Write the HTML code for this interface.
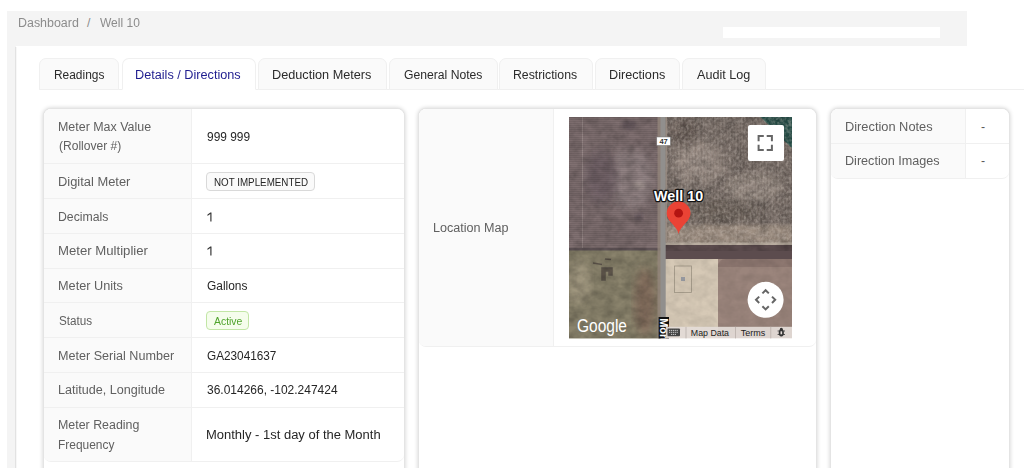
<!DOCTYPE html>
<html>
<head>
<meta charset="utf-8">
<style>
*{box-sizing:border-box;margin:0;padding:0}
html,body{width:1024px;height:476px;overflow:hidden;background:#fff;font-family:"Liberation Sans",sans-serif}
.a{position:absolute}
.t{position:absolute;white-space:nowrap;line-height:20px;transform-origin:0 50%;display:block}
#band{left:7px;top:11px;width:960px;height:35px;background:#f4f4f4}
#strip{left:7px;top:46px;width:9px;height:422px;background:#f4f4f4}
#stripsh{left:15px;top:47px;width:1px;height:421px;background:#e2e2e2;box-shadow:1px 0 0 #f7f7f7}
#search{left:723px;top:27px;width:217px;height:11px;background:#fff}
#tabline{left:39px;top:89px;width:985px;height:1px;background:#efefef}
.tab{position:absolute;top:58px;height:32px;background:#fafafa;border:1px solid #f0f0f0;border-radius:7px 7px 0 0}
.tab.act{background:#fff;border-bottom-color:#fff}
.card{position:absolute;top:108px;height:380px;background:#fff;border:1px solid #e4e4e4;border-radius:8px;box-shadow:0 0 4px rgba(0,0,0,.19)}
.tbl{position:absolute;left:0;top:0;right:0;border-bottom:1px solid #f0f0f0;border-radius:7px;overflow:hidden;background:#fff}
.lab{position:absolute;left:0;top:0;bottom:0;background:#fafafa;border-right:1px solid #f0f0f0}
.sep{position:absolute;left:0;right:0;height:1px;background:#f0f0f0}
.tag{position:absolute;border:1px solid #d9d9d9;border-radius:4px;background:#fafafa}
.tag.g{background:#f5fdec;border-color:#c2e6a6}
#cut{left:0;top:468px;width:1024px;height:8px;background:#fff}
</style>
</head>
<body>
<div id="band" class="a"></div>
<div id="strip" class="a"></div>
<div id="stripsh" class="a"></div>
<div id="search" class="a"></div>

<div id="tabline" class="a"></div>
<div class="tab" style="left:39px;width:80px"></div>
<div class="tab act" style="left:122px;width:134px"></div>
<div class="tab" style="left:258px;width:129px"></div>
<div class="tab" style="left:389px;width:109px"></div>
<div class="tab" style="left:499px;width:94px"></div>
<div class="tab" style="left:595px;width:85px"></div>
<div class="tab" style="left:682px;width:84px"></div>

<!-- left card -->
<div class="card" style="left:43px;width:362px">
  <div class="tbl" style="height:353px">
    <div class="lab" style="width:148px"></div>
    <div class="sep" style="top:54px"></div>
    <div class="sep" style="top:89px"></div>
    <div class="sep" style="top:124px"></div>
    <div class="sep" style="top:159px"></div>
    <div class="sep" style="top:193px"></div>
    <div class="sep" style="top:228px"></div>
    <div class="sep" style="top:263px"></div>
    <div class="sep" style="top:298px"></div>
  </div>
</div>
<div class="tag" style="left:206px;top:172px;width:109px;height:19px"></div>
<div class="tag g" style="left:206px;top:311px;width:43px;height:19px"></div>

<!-- middle card -->
<div class="card" style="left:418px;width:399px">
  <div class="tbl" style="height:238px">
    <div class="lab" style="width:135px"></div>
  </div>
</div>

<!-- right card -->
<div class="card" style="left:830px;width:180px">
  <div class="tbl" style="height:70px">
    <div class="lab" style="width:135px"></div>
    <div class="sep" style="top:34px"></div>
  </div>
</div>

<svg class="a" style="left:207px;top:212px" width="6" height="10" viewBox="0 0 6 10"><path d="M0.5 2.6 L3.3 0.6 H4.5 V9.4 H3.3 V2.1 L0.5 3.9z" fill="#383838"/></svg>
<svg class="a" style="left:207px;top:246px" width="6" height="10" viewBox="0 0 6 10"><path d="M0.5 2.6 L3.3 0.6 H4.5 V9.4 H3.3 V2.1 L0.5 3.9z" fill="#383838"/></svg>
<svg class="a" style="left:569px;top:117px" width="223" height="222" viewBox="0 0 223 222">
<defs>
  <filter id="nz" x="0" y="0" width="100%" height="100%">
    <feTurbulence type="fractalNoise" baseFrequency="0.09 0.12" numOctaves="3" seed="7" result="n"/>
    <feColorMatrix in="n" type="matrix" values="0 0 0 0 0  0 0 0 0 0  0 0 0 0 0  0.9 0.9 0 0 -0.62"/>
  </filter>
  <filter id="nz2" x="0" y="0" width="100%" height="100%">
    <feTurbulence type="fractalNoise" baseFrequency="0.05 0.07" numOctaves="2" seed="3" result="n"/>
    <feColorMatrix in="n" type="matrix" values="0 0 0 0 1  0 0 0 0 0.95  0 0 0 0 0.88  1.2 1.2 0 0 -0.95"/>
  </filter>
  <filter id="nz3" x="0" y="0" width="100%" height="100%"><feTurbulence type="fractalNoise" baseFrequency="0.35 0.3" numOctaves="2" seed="11" result="n"/><feColorMatrix in="n" type="matrix" values="0 0 0 0 0.78  0 0 0 0 0.70  0 0 0 0 0.64  1.6 1.6 0 0 -1.25"/></filter>
  <filter id="b2"><feGaussianBlur stdDeviation="2"/></filter>
  <filter id="b4"><feGaussianBlur stdDeviation="4"/></filter>
  <filter id="b1"><feGaussianBlur stdDeviation="0.7"/></filter>
  <pattern id="hl" width="4" height="2" patternUnits="userSpaceOnUse"><rect width="4" height="1" y="0" fill="#000" opacity="0.07"/></pattern>
  <pattern id="vl" width="3" height="4" patternUnits="userSpaceOnUse"><rect width="1" height="4" fill="#000" opacity="0.06"/></pattern>
  <clipPath id="mc"><rect width="223" height="221.4"/></clipPath>
</defs>
<g clip-path="url(#mc)">
  <!-- upper-left field -->
  <rect x="0" y="0" width="92" height="134" fill="#807071"/>
  <ellipse cx="62" cy="62" rx="22" ry="30" fill="#918283" filter="url(#b4)"/><ellipse cx="70" cy="68" rx="6" ry="4" fill="#a39592" filter="url(#b2)"/>
  <ellipse cx="32" cy="60" rx="16" ry="26" fill="#74656a" filter="url(#b4)"/><ellipse cx="60" cy="8" rx="8" ry="5" fill="#685a5e" filter="url(#b2)"/><ellipse cx="70" cy="100" rx="4" ry="4" fill="#685a5e" filter="url(#b2)"/><rect x="13" y="0" width="0.8" height="134" fill="#a89a98" opacity="0.7"/>
  <rect x="0" y="0" width="92" height="134" fill="url(#hl)"/>
  <!-- lower-left field -->
  <rect x="0" y="133" width="92" height="89" fill="#8a836c"/>
  <rect x="0" y="131" width="92" height="2.5" fill="#5f5256" filter="url(#b1)"/>
  <ellipse cx="10" cy="165" rx="12" ry="22" fill="#a0977f" filter="url(#b4)"/>
  <ellipse cx="76" cy="185" rx="11" ry="34" fill="#85705f" filter="url(#b4)"/>
  <path d="M33 151h10v7h-3v-4h-4v9h-3z M24 146l9 1.5 M36 142l6 0.5" fill="#5e564c" stroke="#5e564c" stroke-width="1.6" filter="url(#b1)"/>
  <!-- upper-right field -->
  <rect x="96" y="0" width="127" height="127" fill="#746963"/>
  <ellipse cx="130" cy="45" rx="26" ry="22" fill="#94877f" filter="url(#b4)"/>
  <ellipse cx="185" cy="70" rx="30" ry="14" fill="#90847b" filter="url(#b4)"/>
  <ellipse cx="150" cy="95" rx="38" ry="12" fill="#6a6058" filter="url(#b4)"/>
  <ellipse cx="115" cy="15" rx="14" ry="14" fill="#6a5e58" filter="url(#b4)"/>
  <rect x="96" y="0" width="127" height="127" fill="url(#vl)"/>
  <rect x="96" y="108" width="127" height="18" fill="#9c8d80" filter="url(#b2)"/>
  <path d="M189 -2 L225 -2 L225 33 Q214 23 206 14 Q198 6 189 -2z" fill="#265048" filter="url(#b1)"/>
  <!-- horizontal road + dark band -->
  <rect x="96" y="128" width="127" height="14" fill="#5c4c4e"/>
  <rect x="96" y="125.5" width="127" height="2.5" fill="#b9ada0"/>
  <!-- sandy + brown -->
  <rect x="96" y="142" width="53" height="79" fill="#d6c9b6"/>
  <rect x="149" y="142" width="74" height="79" fill="#9b857c"/>
  <path d="M149 150 Q149 142 157 142 L223 142 L223 150z" fill="#8d7770"/>
  <rect x="105.5" y="149" width="17" height="26.5" fill="none" stroke="#9f9484" stroke-width="0.8"/>
  <path d="M112 160h4v4h-4z" fill="#9a9ca3"/>
  <!-- texture -->
  <rect width="223" height="134" filter="url(#nz)" opacity="0.28"/><rect y="134" width="92" height="87" filter="url(#nz)" opacity="0.3"/><rect x="96" y="142" width="127" height="79" filter="url(#nz)" opacity="0.12"/>
  <rect x="96" y="0" width="127" height="126" filter="url(#nz3)" opacity="0.3"/>
  <!-- vertical road -->
  <rect x="88.5" y="0" width="3.5" height="221" fill="#94867c" opacity="0.8"/>
  <rect x="91.5" y="0" width="5.2" height="221" fill="#918f8d"/>
  <rect x="96.5" y="0" width="1.5" height="125" fill="#9c8f84" opacity="0.8"/>
  <!-- 47 shield -->
  <rect x="87.8" y="20" width="13.6" height="8.4" fill="#fff" stroke="#777" stroke-width="0.5"/>
  <text x="94.6" y="27" font-family="Liberation Sans, sans-serif" font-size="7.5" font-weight="bold" text-anchor="middle" fill="#333">47</text>
  <!-- fullscreen -->
  <rect x="179" y="8" width="36" height="36" rx="2" fill="#fff"/>
  <path d="M189.6 24.3v-5.3h5.2 M197.7 19h5.2v5.3 M202.9 27.7v5.3h-5.2 M194.8 33h-5.2v-5.3" fill="none" stroke="#666" stroke-width="2"/>
  <!-- pan -->
  <circle cx="196.6" cy="182.8" r="18" fill="#fff"/>
  <path d="M193.4 176.4l3.2-3.2 3.2 3.2 M193.4 189.2l3.2 3.2 3.2-3.2 M190.2 179.6l-3.2 3.2 3.2 3.2 M203 179.6l3.2 3.2-3.2 3.2" fill="none" stroke="#666" stroke-width="2"/>
  <!-- label -->
  <text x="109.6" y="83.8" font-family="Liberation Sans, sans-serif" font-size="14.3" font-weight="bold" text-anchor="middle" fill="#fff" stroke="#111" stroke-width="2.6" stroke-linejoin="round" paint-order="stroke">Well 10</text>
  <!-- marker -->
  <path d="M109.6 117 C108.6 109 97.7 104.5 97.7 96.4 A11.9 11.9 0 0 1 121.5 96.4 C121.5 104.5 110.6 109 109.6 117z" fill="#ea4335"/>
  <circle cx="109.6" cy="96.2" r="4.4" fill="#b31412"/>
  <!-- Google -->
  <text x="8" y="215" font-family="Liberation Sans, sans-serif" font-size="17.5" fill="#fff" textLength="50" lengthAdjust="spacingAndGlyphs">Google</text>
  <!-- Mon label -->
  <rect x="89.6" y="200" width="10.4" height="22" fill="#111"/>
  <text transform="translate(90.9,201.2) rotate(90)" font-family="Liberation Sans, sans-serif" font-size="11" font-weight="bold" fill="#fff">Mon</text>
  <!-- bottom bar -->
  <rect x="96.8" y="209.8" width="127" height="12" fill="#e4dcd8" opacity="0.92"/>
  <rect x="98.5" y="211.6" width="12.5" height="7.6" rx="1" fill="#444"/>
  <path d="M100 213.4h9.5 M100 215.3h9.5 M102 217.4h5.5" stroke="#ddd" stroke-width="0.9" stroke-dasharray="1.2 0.7"/>
  <rect x="116.6" y="209.8" width="0.8" height="12" fill="#b9b0ab"/>
  <rect x="166" y="209.8" width="0.8" height="12" fill="#b9b0ab"/>
  <rect x="201.4" y="209.8" width="0.8" height="12" fill="#b9b0ab"/>
  <text x="121.8" y="218.8" font-family="Liberation Sans, sans-serif" font-size="9" fill="#222" textLength="38.2" lengthAdjust="spacingAndGlyphs">Map Data</text>
  <text x="171.7" y="218.8" font-family="Liberation Sans, sans-serif" font-size="9" fill="#222" textLength="24.5" lengthAdjust="spacingAndGlyphs">Terms</text>
  <g fill="#333"><ellipse cx="212.3" cy="216" rx="2.6" ry="3.4"/><circle cx="212.3" cy="212.4" r="1.6"/><path d="M208.6 214l7.4 0 M208.6 217.5h7.4" stroke="#333" stroke-width="0.8"/><rect x="211.5" y="214.3" width="1.6" height="3" fill="#e4dcd8"/></g>
</g>
</svg>


<span class="t" style="left:18.49px;top:13.24px;font-size:12.3px;color:#8c8c8c;font-weight:400;transform:scaleX(1.0115)">Dashboard</span>
<span class="t" style="left:87.00px;top:13.24px;font-size:12.3px;color:#8c8c8c;font-weight:400;transform:scaleX(1.0000)">/</span>
<span class="t" style="left:99.50px;top:13.24px;font-size:12.3px;color:#8c8c8c;font-weight:400;transform:scaleX(0.9770)">Well 10</span>
<span class="t" style="left:53.53px;top:65.24px;font-size:12.3px;color:#2b2b2b;font-weight:400;transform:scaleX(0.9694)">Readings</span>
<span class="t" style="left:135.22px;top:65.24px;font-size:12.3px;color:#1f1d8f;font-weight:400;transform:scaleX(1.0310)">Details / Directions</span>
<span class="t" style="left:271.97px;top:65.24px;font-size:12.3px;color:#2b2b2b;font-weight:400;transform:scaleX(1.0318)">Deduction Meters</span>
<span class="t" style="left:403.75px;top:65.24px;font-size:12.3px;color:#2b2b2b;font-weight:400;transform:scaleX(0.9888)">General Notes</span>
<span class="t" style="left:513.30px;top:65.24px;font-size:12.3px;color:#2b2b2b;font-weight:400;transform:scaleX(0.9986)">Restrictions</span>
<span class="t" style="left:609.07px;top:65.24px;font-size:12.3px;color:#2b2b2b;font-weight:400;transform:scaleX(1.0295)">Directions</span>
<span class="t" style="left:697.40px;top:65.24px;font-size:12.3px;color:#2b2b2b;font-weight:400;transform:scaleX(1.0245)">Audit Log</span>
<span class="t" style="left:57.74px;top:117.04px;font-size:12.3px;color:#606060;font-weight:400;transform:scaleX(1.0116)">Meter Max Value</span>
<span class="t" style="left:58.75px;top:136.44px;font-size:12.3px;color:#606060;font-weight:400;transform:scaleX(0.9810)">(Rollover #)</span>
<span class="t" style="left:57.70px;top:171.84px;font-size:12.3px;color:#606060;font-weight:400;transform:scaleX(1.0490)">Digital Meter</span>
<span class="t" style="left:57.75px;top:206.94px;font-size:12.3px;color:#606060;font-weight:400;transform:scaleX(0.9967)">Decimals</span>
<span class="t" style="left:57.68px;top:241.04px;font-size:12.3px;color:#606060;font-weight:400;transform:scaleX(1.0699)">Meter Multiplier</span>
<span class="t" style="left:57.72px;top:276.34px;font-size:12.3px;color:#606060;font-weight:400;transform:scaleX(1.0329)">Meter Units</span>
<span class="t" style="left:58.75px;top:310.94px;font-size:12.3px;color:#606060;font-weight:400;transform:scaleX(0.9507)">Status</span>
<span class="t" style="left:57.73px;top:345.84px;font-size:12.3px;color:#606060;font-weight:400;transform:scaleX(1.0236)">Meter Serial Number</span>
<span class="t" style="left:57.73px;top:380.44px;font-size:12.3px;color:#606060;font-weight:400;transform:scaleX(1.0239)">Latitude, Longitude</span>
<span class="t" style="left:57.74px;top:415.24px;font-size:12.3px;color:#606060;font-weight:400;transform:scaleX(1.0086)">Meter Reading</span>
<span class="t" style="left:57.78px;top:434.74px;font-size:12.3px;color:#606060;font-weight:400;transform:scaleX(0.9707)">Frequency</span>
<span class="t" style="left:206.75px;top:126.74px;font-size:12.3px;color:#262626;font-weight:400;transform:scaleX(0.9695)">999 999</span>
<span class="t" style="left:206.75px;top:276.34px;font-size:12.3px;color:#262626;font-weight:400;transform:scaleX(0.9688)">Gallons</span>
<span class="t" style="left:206.75px;top:345.84px;font-size:12.3px;color:#262626;font-weight:400;transform:scaleX(0.9568)">GA23041637</span>
<span class="t" style="left:206.75px;top:380.44px;font-size:12.3px;color:#262626;font-weight:400;transform:scaleX(0.9744)">36.014266, -102.247424</span>
<span class="t" style="left:205.69px;top:425.04px;font-size:12.3px;color:#262626;font-weight:400;transform:scaleX(1.0558)">Monthly - 1st day of the Month</span>
<span class="t" style="left:213.60px;top:171.82px;font-size:10.9px;color:#262626;font-weight:400;transform:scaleX(0.8997)">NOT IMPLEMENTED</span>
<span class="t" style="left:213.75px;top:311.09px;font-size:11px;color:#4fa32c;font-weight:400;transform:scaleX(0.9468)">Active</span>
<span class="t" style="left:433.38px;top:218.34px;font-size:12.3px;color:#606060;font-weight:400;transform:scaleX(1.0234)">Location Map</span>
<span class="t" style="left:844.96px;top:117.24px;font-size:12.3px;color:#606060;font-weight:400;transform:scaleX(1.0421)">Direction Notes</span>
<span class="t" style="left:844.97px;top:151.34px;font-size:12.3px;color:#606060;font-weight:400;transform:scaleX(1.0251)">Direction Images</span>
<span class="t" style="left:980.90px;top:117.24px;font-size:12.3px;color:#5a5a5a;font-weight:400;transform:scaleX(1.0000)">-</span>
<span class="t" style="left:980.90px;top:151.34px;font-size:12.3px;color:#5a5a5a;font-weight:400;transform:scaleX(1.0000)">-</span>
<div id="cut" class="a"></div>
</body>
</html>
